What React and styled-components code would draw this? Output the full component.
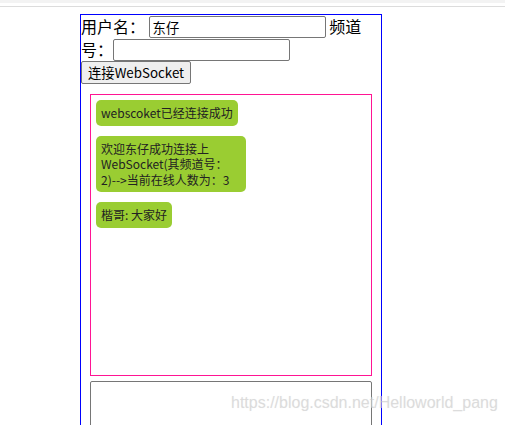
import React from 'react';
import styled, { createGlobalStyle } from 'styled-components';

const GlobalStyle = createGlobalStyle`
  html, body {
    margin: 0;
    padding: 0;
    background: #fff;
  }
  body {
    font-family: "Noto Sans CJK SC", "Liberation Sans", sans-serif;
    overflow: hidden;
  }
`;

const Page = styled.div`
  position: relative;
  width: 505px;
  height: 425px;
  overflow: hidden;
`;

const TopStrip = styled.div`
  height: 3px;
  background: #f3f3f3;
  border-bottom: 3px solid #fff;
  box-shadow: 0 1px 0 #dcdcdc;
  margin-bottom: 8px;
`;

const Container = styled.div`
  margin-left: 80px;
  width: 300px;
  border: 1px solid #0000ff;
  font-size: 16px;
  line-height: 23px;
  color: #000;
  padding-bottom: 20px;
`;

const FormLine = styled.div`
  line-height: 23px;
  height: 46px;
  overflow: hidden;
`;

const Field = styled.input`
  box-sizing: border-box;
  width: 177px;
  height: 22px;
  margin: 1px 0 0;
  padding: 1px 3px;
  border: 1px solid #767676;
  border-radius: 2px;
  font-family: "Noto Sans CJK SC", "Liberation Sans", sans-serif;
  font-size: 13.33px;
  vertical-align: top;
  color: #000;
`;

const ConnectButton = styled.button`
  display: block;
  box-sizing: border-box;
  height: 23px;
  padding: 0 6px;
  border: 1px solid #767676;
  border-radius: 2px;
  background: #efefef;
  font-family: "Noto Sans CJK SC", "Liberation Sans", sans-serif;
  font-size: 13.33px;
  color: #000;
`;

const MessageBox = styled.div`
  box-sizing: border-box;
  width: 282px;
  height: 282px;
  margin: 10px auto 0;
  padding: 5px;
  border: 1px solid #ff1493;
`;

const Bubble = styled.div`
  width: fit-content;
  max-width: 140px;
  margin-bottom: 10px;
  padding: 5px;
  border-radius: 5px;
  background: #9acd32;
  font-size: 12px;
  line-height: 15.5px;
  color: #222;
`;

const Composer = styled.textarea`
  display: block;
  box-sizing: border-box;
  width: 282px;
  height: 100px;
  margin: 5px auto 0;
  border: 1px solid #767676;
  border-radius: 2px;
  resize: none;
`;

const Watermark = styled.div`
  position: absolute;
  left: 231px;
  top: 394px;
  font-family: "Liberation Sans", Arial, sans-serif;
  font-size: 16px;
  color: rgba(200, 200, 200, 0.55);
  text-shadow: 0 0 1px rgba(230, 230, 230, 0.6);
  white-space: nowrap;
  pointer-events: none;
`;

const messages = [
  'webscoket已经连接成功',
  '欢迎东仔成功连接上WebSocket(其频道号：2)-->当前在线人数为：3',
  '楷哥: 大家好',
];

export default function App() {
  return (
    <Page>
      <GlobalStyle />
      <TopStrip />
      <Container>
        <FormLine>
          用户名：&nbsp;<Field defaultValue="东仔" /> 频道号：<Field />
        </FormLine>
        <ConnectButton>连接WebSocket</ConnectButton>
        <MessageBox>
          {messages.map((m, i) => (
            <Bubble key={i}>{m}</Bubble>
          ))}
        </MessageBox>
        <Composer />
      </Container>
      <Watermark>https://blog.csdn.net/Helloworld_pang</Watermark>
    </Page>
  );
}
